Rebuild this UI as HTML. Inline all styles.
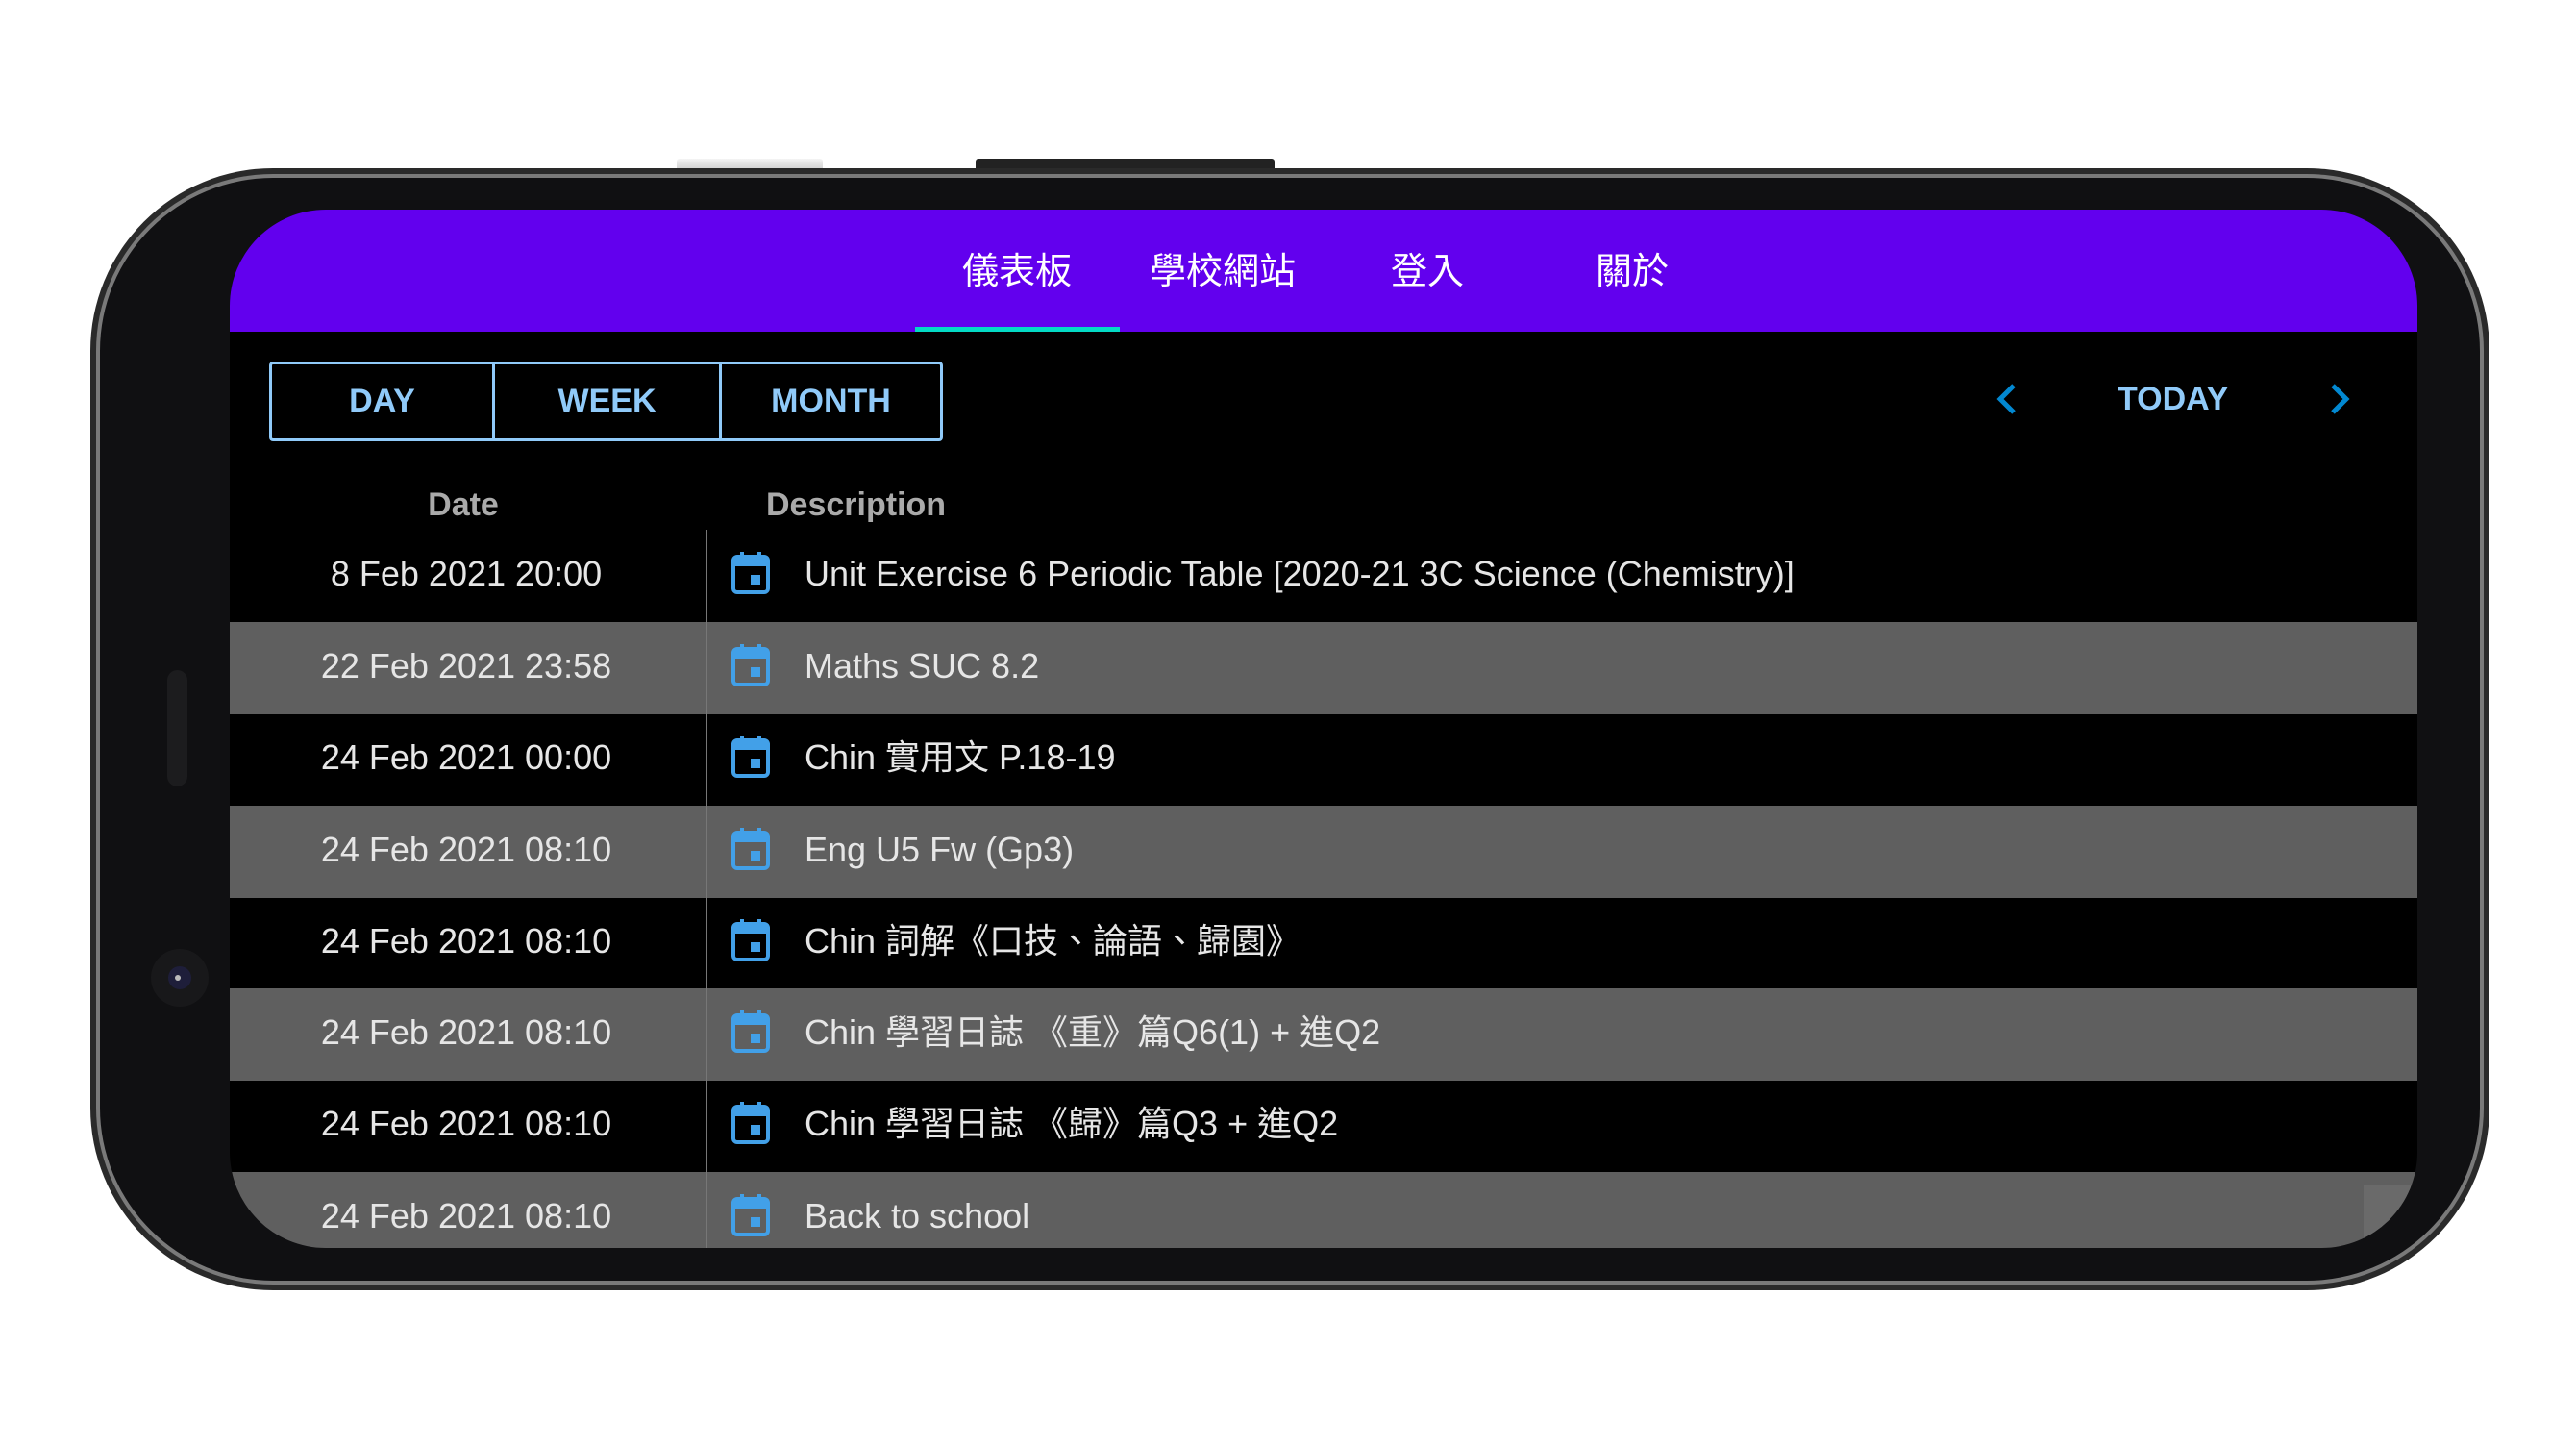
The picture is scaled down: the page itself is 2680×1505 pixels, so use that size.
<!DOCTYPE html>
<html><head><meta charset="utf-8"><style>
*{margin:0;padding:0;box-sizing:border-box}
body{width:2680px;height:1505px;background:#fff;position:relative;overflow:hidden;font-family:"Liberation Sans","Noto Sans CJK TC",sans-serif}
.btn1{position:absolute;left:704px;top:165px;width:152px;height:12px;background:linear-gradient(#f4f4f4,#cfcfcf);border-radius:3px 3px 0 0}
.btn2{position:absolute;left:1015px;top:165px;width:311px;height:12px;background:#222;border-radius:3px 3px 0 0}
.phone{position:absolute;left:94px;top:175px;width:2496px;height:1167px;border-radius:190px;background:#2a2a2a;}
.rim{position:absolute;left:6px;top:6px;right:6px;bottom:6px;border-radius:184px;background:#7a7a7a}
.body{position:absolute;left:10px;top:10px;right:10px;bottom:10px;border-radius:180px;background:#101012}
.spk{position:absolute;left:174px;top:697px;width:21px;height:121px;border-radius:11px;background:#1c1c1e}
.cam{position:absolute;left:157px;top:987px;width:60px;height:60px;border-radius:50%;background:#18181a}
.cam i{position:absolute;left:18px;top:18px;width:24px;height:24px;border-radius:50%;background:#1e1e3a}
.cam b{position:absolute;left:25px;top:27px;width:6px;height:6px;border-radius:50%;background:#bbb}
.screen{position:absolute;left:239px;top:218px;width:2290px;height:1080px;border-radius:100px;overflow:hidden;background:#000}
.hdr{position:absolute;left:0;top:0;width:100%;height:127px;background:#6200ee}
.tab{position:absolute;top:33px;color:#fff;font-size:38px;transform:translateX(-50%);white-space:nowrap}
.ind{position:absolute;left:720px;top:122px;width:213px;height:5px;background:#03dac5}
.grp{position:absolute;left:41px;top:158px;width:701px;height:83px;border:3px solid #90caf9;border-radius:4px}
.grp div{position:absolute;top:0;height:77px;line-height:77px;text-align:center;color:#90caf9;font-size:34px;font-weight:bold}
.sep{position:absolute;top:0;width:3px;height:77px;background:#90caf9}
.nav{position:absolute;top:178px;color:#90caf9;font-size:34px;font-weight:bold;left:1964px}
.th{position:absolute;top:288px;color:#aaa;font-size:34px;font-weight:bold}
.row{position:absolute;left:0;width:100%;height:96px;}
.row.g{background:#5f5f5f}
.d{position:absolute;left:0;width:492px;text-align:center;top:26px;font-size:36px;line-height:40px;color:#e6e6e6}
.t{position:absolute;left:598px;top:26px;font-size:36px;line-height:40px;height:40px;color:#e6e6e6;white-space:nowrap}
.ic{position:absolute;left:522px;top:23px}
.vl{position:absolute;left:495px;top:335px;width:2px;height:760px;background:#777}
</style></head><body>
<div class="btn1"></div><div class="btn2"></div>
<div class="phone"><div class="rim"></div><div class="body"></div></div>
<div class="spk"></div>
<div class="cam"><i></i><b></b></div>
<div class="screen" style="width:2276px">
 <div class="hdr">
  <div class="tab" style="left:819px">儀表板</div>
  <div class="tab" style="left:1033px">學校網站</div>
  <div class="tab" style="left:1246px">登入</div>
  <div class="tab" style="left:1459px">關於</div>
  <div class="ind" style="left:713px"></div>
 </div>
 <div class="grp">
  <div style="left:0;width:229px">DAY</div>
  <div class="sep" style="left:229px"></div>
  <div style="left:232px;width:233px">WEEK</div>
  <div class="sep" style="left:465px"></div>
  <div style="left:468px;width:227px">MONTH</div>
 </div>
 <svg style="position:absolute;left:1836px;top:180px" width="24" height="34" viewBox="0 0 24 34"><path d="M20 3 L6 17 L20 31" fill="none" stroke="#0288d1" stroke-width="5"/></svg>
 <div class="nav">TODAY</div>
 <svg style="position:absolute;left:2184px;top:180px" width="24" height="34" viewBox="0 0 24 34"><path d="M4 3 L18 17 L4 31" fill="none" stroke="#0288d1" stroke-width="5"/></svg>
 <div class="th" style="left:0;width:486px;text-align:center">Date</div>
 <div class="th" style="left:558px">Description</div>

 <div class="row" style="top:333px"><div class="d">8 Feb 2021 20:00</div><svg class="ic" width="40" height="44"><rect x="9" y="0" width="4" height="8" fill="#42a0e8"/><rect x="27" y="0" width="4" height="8" fill="#42a0e8"/><rect x="2" y="5" width="36" height="37" rx="4" fill="none" stroke="#42a0e8" stroke-width="4"/><rect x="2" y="5" width="36" height="10" fill="#42a0e8"/><rect x="20" y="24" width="10" height="10" fill="#42a0e8"/></svg><div class="t">Unit Exercise 6 Periodic Table [2020-21 3C Science (Chemistry)]</div></div>
 <div class="row g" style="top:429px"><div class="d">22 Feb 2021 23:58</div><svg class="ic" width="40" height="44"><rect x="9" y="0" width="4" height="8" fill="#42a0e8"/><rect x="27" y="0" width="4" height="8" fill="#42a0e8"/><rect x="2" y="5" width="36" height="37" rx="4" fill="none" stroke="#42a0e8" stroke-width="4"/><rect x="2" y="5" width="36" height="10" fill="#42a0e8"/><rect x="20" y="24" width="10" height="10" fill="#42a0e8"/></svg><div class="t">Maths SUC 8.2</div></div>
 <div class="row" style="top:524px"><div class="d">24 Feb 2021 00:00</div><svg class="ic" width="40" height="44"><rect x="9" y="0" width="4" height="8" fill="#42a0e8"/><rect x="27" y="0" width="4" height="8" fill="#42a0e8"/><rect x="2" y="5" width="36" height="37" rx="4" fill="none" stroke="#42a0e8" stroke-width="4"/><rect x="2" y="5" width="36" height="10" fill="#42a0e8"/><rect x="20" y="24" width="10" height="10" fill="#42a0e8"/></svg><div class="t">Chin 實用文 P.18-19</div></div>
 <div class="row g" style="top:620px"><div class="d">24 Feb 2021 08:10</div><svg class="ic" width="40" height="44"><rect x="9" y="0" width="4" height="8" fill="#42a0e8"/><rect x="27" y="0" width="4" height="8" fill="#42a0e8"/><rect x="2" y="5" width="36" height="37" rx="4" fill="none" stroke="#42a0e8" stroke-width="4"/><rect x="2" y="5" width="36" height="10" fill="#42a0e8"/><rect x="20" y="24" width="10" height="10" fill="#42a0e8"/></svg><div class="t">Eng U5 Fw (Gp3)</div></div>
 <div class="row" style="top:715px"><div class="d">24 Feb 2021 08:10</div><svg class="ic" width="40" height="44"><rect x="9" y="0" width="4" height="8" fill="#42a0e8"/><rect x="27" y="0" width="4" height="8" fill="#42a0e8"/><rect x="2" y="5" width="36" height="37" rx="4" fill="none" stroke="#42a0e8" stroke-width="4"/><rect x="2" y="5" width="36" height="10" fill="#42a0e8"/><rect x="20" y="24" width="10" height="10" fill="#42a0e8"/></svg><div class="t">Chin 詞解《口技、論語、歸園》</div></div>
 <div class="row g" style="top:810px"><div class="d">24 Feb 2021 08:10</div><svg class="ic" width="40" height="44"><rect x="9" y="0" width="4" height="8" fill="#42a0e8"/><rect x="27" y="0" width="4" height="8" fill="#42a0e8"/><rect x="2" y="5" width="36" height="37" rx="4" fill="none" stroke="#42a0e8" stroke-width="4"/><rect x="2" y="5" width="36" height="10" fill="#42a0e8"/><rect x="20" y="24" width="10" height="10" fill="#42a0e8"/></svg><div class="t">Chin 學習日誌 《重》篇Q6(1) + 進Q2</div></div>
 <div class="row" style="top:905px"><div class="d">24 Feb 2021 08:10</div><svg class="ic" width="40" height="44"><rect x="9" y="0" width="4" height="8" fill="#42a0e8"/><rect x="27" y="0" width="4" height="8" fill="#42a0e8"/><rect x="2" y="5" width="36" height="37" rx="4" fill="none" stroke="#42a0e8" stroke-width="4"/><rect x="2" y="5" width="36" height="10" fill="#42a0e8"/><rect x="20" y="24" width="10" height="10" fill="#42a0e8"/></svg><div class="t">Chin 學習日誌 《歸》篇Q3 + 進Q2</div></div>
 <div class="row g" style="top:1001px;height:100px"><div class="d">24 Feb 2021 08:10</div><svg class="ic" width="40" height="44"><rect x="9" y="0" width="4" height="8" fill="#42a0e8"/><rect x="27" y="0" width="4" height="8" fill="#42a0e8"/><rect x="2" y="5" width="36" height="37" rx="4" fill="none" stroke="#42a0e8" stroke-width="4"/><rect x="2" y="5" width="36" height="10" fill="#42a0e8"/><rect x="20" y="24" width="10" height="10" fill="#42a0e8"/></svg><div class="t">Back to school</div></div>
 <div style="position:absolute;left:2220px;top:1014px;width:60px;height:80px;background:#6a6a6a"></div>
 <div class="vl" style="top:333px"></div>
</div>
</body></html>
